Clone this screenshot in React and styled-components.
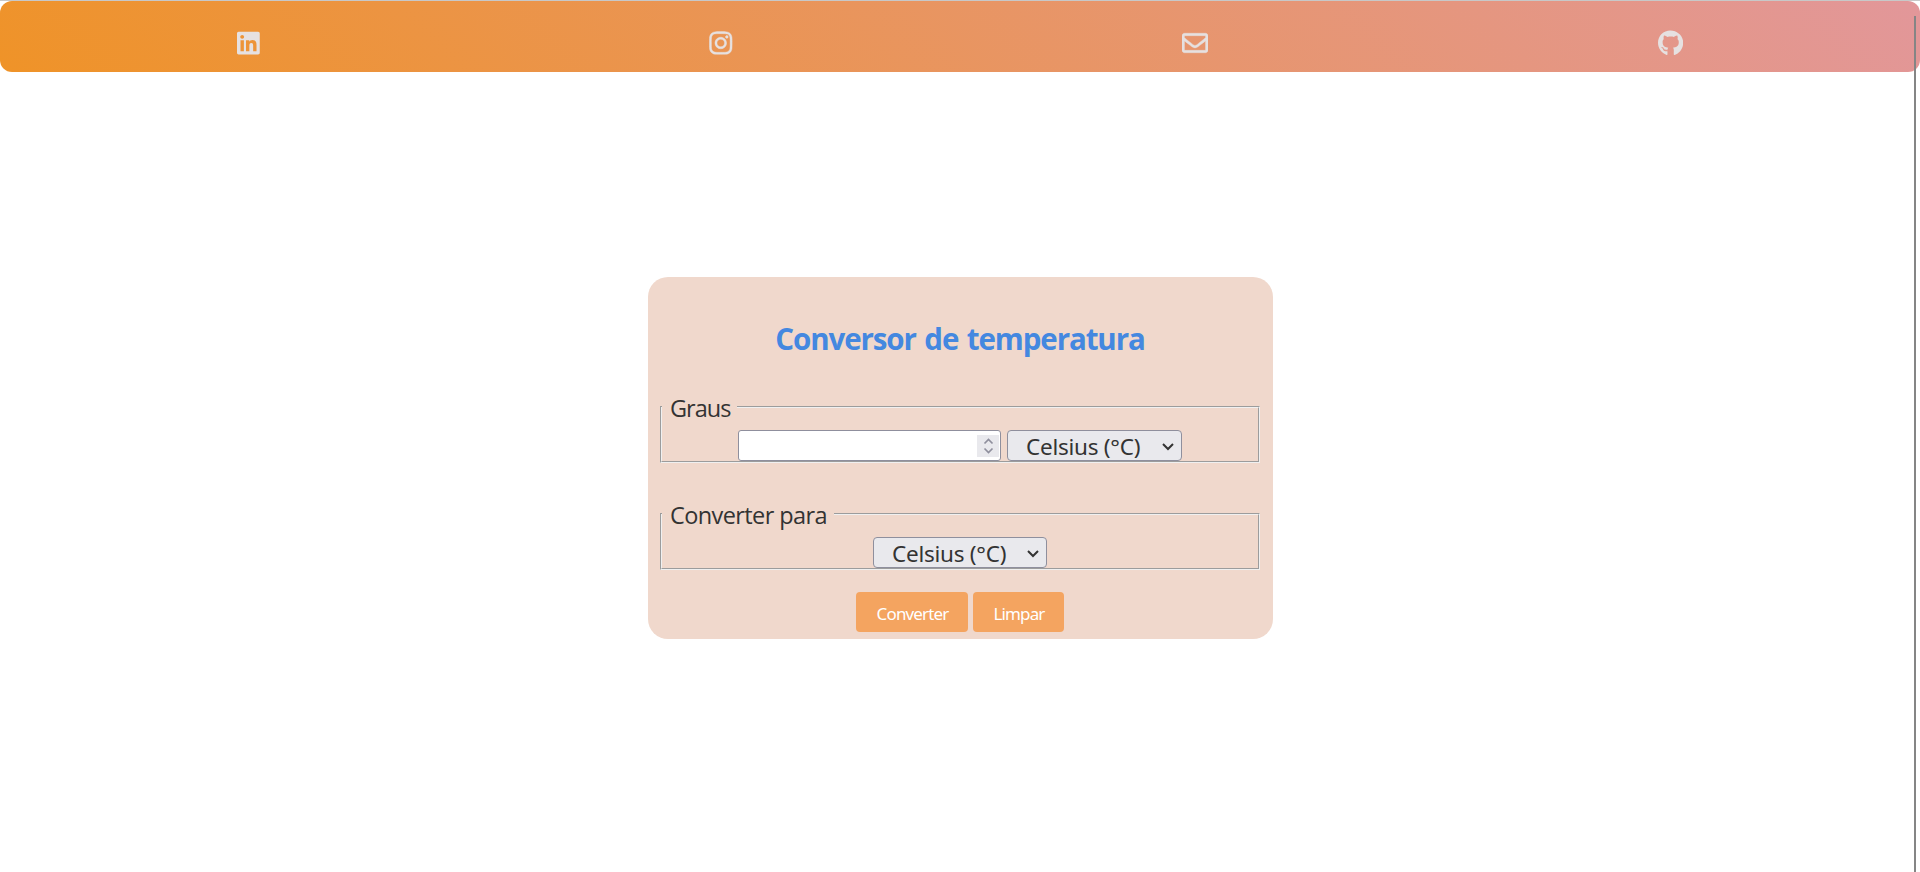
import React from "react";
import styled, { createGlobalStyle } from "styled-components";
import { FaLinkedin, FaInstagram, FaRegEnvelope, FaGithub } from "react-icons/fa";

const GlobalStyle = createGlobalStyle`
  * { box-sizing: border-box; }
  body {
    margin: 0;
    background: #fff;
    color: #333;
    font-family: "Open Sans", "Noto Sans", sans-serif;
    overflow: hidden;
  }
`;

const Page = styled.div`
  position: relative;
  display: flex;
  flex-direction: column;
  align-items: center;
  height: 872px;
  border-top: 1px solid #c8c8c8;
`;

const NavBar = styled.nav`
  display: flex;
  justify-content: space-around;
  width: 100%;
  height: 71px;
  padding: 29px 12px 0;
  border-radius: 12px;
  background: linear-gradient(45deg, #ef9328, #e2979a);
`;

const NavLink = styled.a`
  display: flex;
  width: ${({ $width }) => $width}px;
  height: 26px;
  color: #e6e1e1;

  svg {
    width: 100%;
    height: 100%;
    stroke: #e6e1e1;
    stroke-width: ${({ $stroke }) => $stroke};
  }
`;

const ScrollThumb = styled.div`
  position: absolute;
  top: 15px;
  right: 4px;
  bottom: 0;
  width: 2px;
  background: #858585;
`;

const Card = styled.main`
  display: flex;
  flex-direction: column;
  align-items: center;
  width: 625px;
  height: 362px;
  margin-top: 205px;
  padding: 40px 12px 0;
  border-radius: 20px;
  background: #f0d8cc;
`;

const Title = styled.h1`
  margin: 0;
  height: 77px;
  line-height: 44px;
  font-size: 29.5px;
  font-weight: 700;
  letter-spacing: -1.1px;
  word-spacing: 2px;
  white-space: nowrap;
  color: #4488e0;
`;

const Group = styled.fieldset`
  display: flex;
  justify-content: center;
  width: 600px;
  height: 69px;
  margin: 0 0 38px;
  padding: 0;
  border: 2px groove #f0f0f0;
`;

const Legend = styled.legend`
  height: 26px;
  padding: 0 7px 0 8px;
  line-height: 28px;
  font-size: 23.5px;
  letter-spacing: ${({ $spacing }) => $spacing}px;
  white-space: nowrap;
`;

const Fields = styled.div`
  display: flex;
  gap: 6px;
  height: 31px;
  margin-top: 10px;
`;

const NumberField = styled.div`
  display: flex;
  align-items: center;
  justify-content: flex-end;
  width: 263px;
  height: 31px;
  padding-right: 1px;
  border: 1px solid #8f8f9d;
  border-radius: 3px;
  background: #fff;
`;

const Stepper = styled.span`
  display: flex;
  width: 22px;
  height: 22px;
  background: #e9e9ed;
`;

const Select = styled.button`
  display: flex;
  align-items: center;
  justify-content: space-between;
  width: ${({ $width }) => $width}px;
  height: 31px;
  padding: 2px 7px 0 18px;
  border: 1px solid #8f8f9d;
  border-radius: 4px;
  background: #e9e9ed;
  color: #333;
  font: 22.5px/28px "Noto Sans", sans-serif;
  letter-spacing: -0.25px;
  white-space: nowrap;
`;

const Actions = styled.div`
  display: flex;
  gap: 5px;
  margin-top: -16px;
`;

const Button = styled.button`
  width: ${({ $width }) => $width}px;
  height: 40px;
  padding: 3px 0 0 1px;
  border: 0;
  border-radius: 4px;
  background: #f4a460;
  color: #fff;
  font: 17px/24px "Noto Sans", sans-serif;
  letter-spacing: -0.85px;
`;

const links = [
  { name: "LinkedIn", Icon: FaLinkedin, width: 22.75, stroke: 0 },
  { name: "Instagram", Icon: FaInstagram, width: 23.5, stroke: 8 },
  { name: "E-mail", Icon: FaRegEnvelope, width: 26, stroke: 8 },
  { name: "GitHub", Icon: FaGithub, width: 25.2, stroke: 0 },
];

function StepArrows() {
  return (
    <svg width="22" height="22" viewBox="0 0 22 22" fill="none" stroke="#8f8f9d" strokeWidth="1.7">
      <path d="M7.5 8.5 11.5 4.5 15.5 8.5M7.5 13.5 11.5 17.5 15.5 13.5" />
    </svg>
  );
}

function UnitSelect({ width }) {
  return (
    <Select type="button" $width={width}>
      <span>Celsius (°C)</span>
      <svg width="12" height="8" viewBox="0 0 12 8" fill="none" stroke="#333" strokeWidth="2">
        <path d="M1 1 6 6 11 1" />
      </svg>
    </Select>
  );
}

export default function App() {
  return (
    <Page>
      <GlobalStyle />
      <NavBar>
        {links.map(({ name, Icon, width, stroke }) => (
          <NavLink key={name} $width={width} $stroke={stroke}>
            <Icon />
          </NavLink>
        ))}
      </NavBar>
      <Card>
        <Title>Conversor de temperatura</Title>
        <Group>
          <Legend $spacing={-1}>Graus</Legend>
          <Fields>
            <NumberField>
              <Stepper>
                <StepArrows />
              </Stepper>
            </NumberField>
            <UnitSelect width={175} />
          </Fields>
        </Group>
        <Group>
          <Legend $spacing={-0.6}>Converter para</Legend>
          <Fields>
            <UnitSelect width={174} />
          </Fields>
        </Group>
        <Actions>
          <Button $width={112}>Converter</Button>
          <Button $width={91}>Limpar</Button>
        </Actions>
      </Card>
      <ScrollThumb />
    </Page>
  );
}
